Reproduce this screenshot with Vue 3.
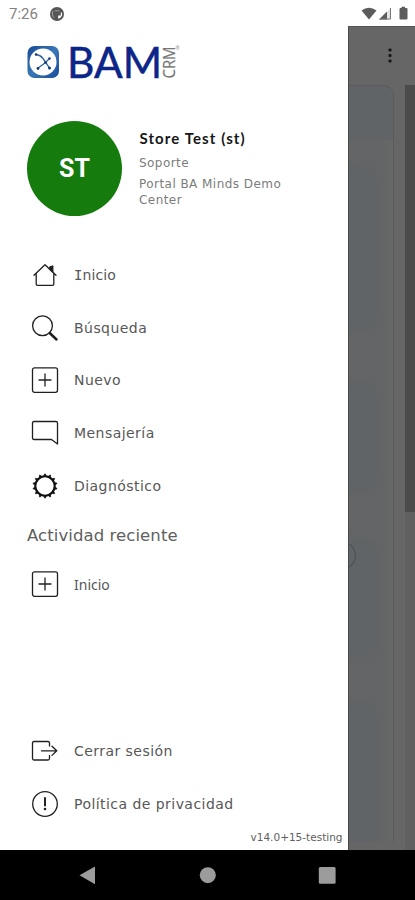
<script setup>
const mainItems = [
  { label: 'Inicio', icon: 'home', cls: 'serif-i' },
  { label: 'Búsqueda', icon: 'search' },
  { label: 'Nuevo', icon: 'plus' },
  { label: 'Mensajería', icon: 'message' },
  { label: 'Diagnóstico', icon: 'gear' },
]
const groups = [
  { name: 'main', items: mainItems },
  { name: 'recent', title: 'Actividad reciente', items: [{ label: 'Inicio', icon: 'plus', cls: 'narrow' }] },
  { name: 'footer', items: [
    { label: 'Cerrar sesión', icon: 'exit' },
    { label: 'Política de privacidad', icon: 'info' },
  ] },
]
const teeth = Array.from({ length: 14 }, (_, i) => (i * 360) / 14)
</script>

<template>
  <div class="phone">
    <header class="status">
      <span class="time">7:26</span>
      <svg class="app-dot" width="14" height="14" viewBox="0 0 14 14">
        <circle cx="7" cy="7" r="7" fill="#555" />
        <path d="M8.200 11.800V8.600H10.800V5.500H12A5.200 5.200 0 0 1 8.200 11.800Z" fill="#fff" />
        <path d="M4.300 10.800A5.200 5.200 0 0 1 3.300 3.800" fill="none" stroke="#aaa" stroke-width="1" />
        <path d="M5 3.800H9.500" stroke="#999" />
      </svg>
      <svg class="signals" width="48" height="16" viewBox="0 0 48 16">
        <path d="M0.500 4.500Q8 -1 15.500 4.500L8 13.500Z" fill="#5c5c5c" />
        <path d="M18 13.500L30 1.500V13.500Z" fill="#e4e4e4" />
        <path d="M18 13.500L26 5.500V13.500Z" fill="#5c5c5c" />
        <path d="M29.500 2V13H18.500" fill="none" stroke="#777" />
        <path d="M39 2H40.500V0.800H44V2H45.500Q46.500 2 46.500 3V12.500Q46.500 13.500 45.500 13.500H39.500Q38.500 13.500 38.500 12.500V3Z" fill="#5c5c5c" />
      </svg>
    </header>

    <div class="stage">
      <aside class="drawer">
        <div class="brand">
          <svg width="165" height="46" viewBox="0 0 165 46">
            <defs>
              <linearGradient id="tile" x1="0" y1="0" x2="1" y2="1">
                <stop offset="0" stop-color="#164a95" /><stop offset=".5" stop-color="#3977b6" /><stop offset="1" stop-color="#194b99" />
              </linearGradient>
            </defs>
            <rect x="0.500" y="3" width="31.500" height="32" rx="7" fill="url(#tile)" />
            <circle cx="16" cy="19" r="13.500" fill="#fff" />
            <path d="M9 11.500Q13.500 12 16 15.500T22.500 25M22.500 15.500L18 20L11 25" fill="none" stroke="#3265a3" stroke-width="1.300" stroke-linecap="round" />
            <g fill="#12386f"><circle cx="9" cy="11.500" r="1.200" /><circle cx="22.500" cy="15.500" r="1.200" /><circle cx="11" cy="25.500" r="1.400" /><circle cx="22.500" cy="25" r="1.500" /><circle cx="18.500" cy="19.500" r="1.300" /></g>
            <text class="bam" x="40" y="34.500" textLength="95" lengthAdjust="spacingAndGlyphs">BAM</text>
            <text class="crm" transform="translate(147.500 35.500) rotate(-90)" textLength="32" lengthAdjust="spacingAndGlyphs">CRM</text>
            <text class="mark" x="148.500" y="7">®</text>
          </svg>
        </div>

        <section class="profile">
          <div class="avatar">ST</div>
          <div class="who">
            <div class="name">Store Test (st)</div>
            <div class="role">Soporte</div>
            <div class="org">Portal BA Minds Demo<br />Center</div>
          </div>
        </section>

        <nav v-for="g in groups" :key="g.name" :class="['group', g.name]">
          <h2 v-if="g.title">{{ g.title }}</h2>
          <a v-for="item in g.items" :key="item.label" class="item">
            <svg width="28" height="28" viewBox="0 0 28 28" fill="none" stroke="#202020" stroke-width="1.300" stroke-linecap="round" stroke-linejoin="round">
              <template v-if="item.icon === 'home'">
                <path d="M3 14.300L14 3.700L25 14.300M5.200 12.600V23Q5.200 24.300 6.500 24.300H21.500Q22.800 24.300 22.800 23V12.600" />
                <path d="M19 5.800L21.800 5V11L18.500 8Z" fill="#202020" />
              </template>
              <template v-else-if="item.icon === 'search'">
                <circle cx="11.500" cy="11.800" r="9.900" /><path d="M18.700 19L25.500 25.500" stroke-width="2.500" />
              </template>
              <template v-else-if="item.icon === 'plus'">
                <rect x="1.500" y="1.800" width="25" height="24.500" rx="2" /><path d="M8 14H20M14 8V20" />
              </template>
              <path v-else-if="item.icon === 'message'" d="M3 2.500H25Q26.500 2.500 26.500 4V25L20.500 20.500H3Q1.500 20.500 1.500 19V4Q1.500 2.500 3 2.500Z" />
              <template v-else-if="item.icon === 'gear'">
                <circle cx="14" cy="14" r="9.700" stroke-width="2.100" stroke="#111" />
                <path v-for="a in teeth" :key="a" d="M12.900 4L13.600 1.900H14.400L15.100 4Z" :transform="`rotate(${a} 14 14)`" fill="#111" stroke="#111" stroke-width=".7" />
              </template>
              <path v-else-if="item.icon === 'exit'" d="M18.500 9V6Q18.500 4.500 17 4.500H3Q1.500 4.500 1.500 6V21.500Q1.500 23 3 23H17Q18.500 23 18.500 21.500V18.500M10.500 13.800H25.500M21 9.200L25.800 13.800L21 18.400" />
              <template v-else>
                <circle cx="14" cy="14" r="12.300" /><path d="M14 8V15.500" stroke-width="2" /><circle cx="14" cy="19" r=".7" fill="#202020" />
              </template>
            </svg>
            <span :class="['label', item.cls]">{{ item.label }}</span>
          </a>
        </nav>
        <div class="version">v14.0+15-testing</div>
      </aside>

      <main class="page">
        <div class="toolbar">
          <svg width="4" height="15" viewBox="0 0 4 15" fill="#151515"><rect x=".5" y="0.500" width="3" height="3" rx="1" /><rect x=".5" y="6" width="3" height="3" rx="1" /><rect x=".5" y="11.500" width="3" height="3" rx="1" /></svg>
        </div>
        <div class="content">
          <div class="panel">
            <div class="panel-head"></div>
            <div class="blob b1"></div>
            <div class="blob b2"></div>
            <div class="blob b3"></div>
            <div class="blob b4"></div>
            <div class="knob"></div>
          </div>
          <div class="track"><div class="thumb"></div></div>
        </div>
      </main>
    </div>

    <footer class="keys">
      <svg width="415" height="50" viewBox="0 0 415 50" fill="#9c9c9c">
        <path d="M79.500 25.300L95 16.500V34.200Z" /><circle cx="207.800" cy="25.200" r="8" /><rect x="318.800" y="17" width="16.800" height="16.800" rx="1.500" />
      </svg>
    </footer>
  </div>
</template>

<style>
body { margin: 0; overflow: hidden; }
</style>

<style scoped>
.phone { width: 415px; height: 900px; display: flex; flex-direction: column; background: #fff; font-family: "DejaVu Sans", sans-serif; overflow: hidden; }
.status { height: 26px; flex: none; display: flex; align-items: center; padding: 1px 6px 0 9px; box-sizing: border-box; }
.time { font: 15px Roboto, sans-serif; color: #828282; width: 41px; }
.signals { margin-left: auto; }
.stage { height: 824px; flex: none; display: flex; }
.drawer { width: 348px; height: 824px; box-sizing: border-box; flex: none; background: #fff; display: flex; flex-direction: column; padding-left: 27px; }
.brand { height: 38px; padding-top: 17px; }
.brand svg { display: block; overflow: visible; }
.bam { font: 43px Lato, sans-serif; fill: #0c2588; stroke: #0c2588; stroke-width: .5px; }
.crm { font: 16px "Open Sans", sans-serif; fill: #777; stroke: #777; stroke-width: .2px; }
.mark { font: 5px "Open Sans", sans-serif; fill: #888; }
.profile { display: flex; height: 95px; margin-top: 39.500px; }
.avatar { width: 95px; height: 95px; border-radius: 50%; background: #147b0c; color: #fff; display: flex; align-items: center; justify-content: center; font: 700 25px Roboto, sans-serif; }
.who { padding: 7px 0 0 17px; color: #7c7c7c; font-size: 12px; line-height: 15.500px; letter-spacing: .45px; }
.name { font: 700 15px/21px Lato, sans-serif; letter-spacing: 1.1px; color: #171717; padding-left: .5px; }
.role { margin-top: 7px; }
.org { margin-top: 6px; white-space: nowrap; }
.group { display: flex; flex-direction: column; }
.main { margin-top: 33.200px; }
.item { height: 52.700px; display: flex; align-items: center; padding-left: 4px; }
.label { margin-left: 15px; font-size: 14px; letter-spacing: .45px; color: #575757; white-space: nowrap; }
.serif-i { display: block; letter-spacing: .1px; }
.serif-i::first-letter { font-family: "DejaVu Sans Mono", monospace; }
.narrow { font-family: "Noto Sans", sans-serif; letter-spacing: 0; }
h2 { margin: 0; font-size: 16.500px; line-height: 24px; font-weight: 400; color: #606060; letter-spacing: .08px; padding-top: 11.500px; }
.recent .item { height: 73px; }
.footer { margin-top: auto; }
.version { height: 20px; box-sizing: border-box; padding-right: 5.500px; text-align: right; font-size: 10.500px; line-height: 15px; color: #606060; }
.page { flex: 1; background: #666; border-left: 1px solid #494949; border-top: 1px solid #555; box-sizing: border-box; height: 824px; overflow: hidden; }
.toolbar { height: 58px; box-sizing: border-box; padding: 21px 23px 0 0; display: flex; justify-content: flex-end; }
.content { height: 765px; display: flex; justify-content: space-between; }
.panel { width: 45px; height: 757px; box-sizing: border-box; border: solid #5b5b5b; border-width: 1px 1px 0 0; border-radius: 0 10px 0 0; position: relative; overflow: hidden; background: linear-gradient(90deg, #646566 36px, #656666 38px, #676767); }
.panel-head { height: 54px; background: #606467; }
.blob { position: absolute; left: -12px; width: 40px; background: #606466; border-radius: 0 14px 14px 0; filter: blur(3px); }
.b1 { top: 80px; height: 166px; }
.b2 { top: 295px; height: 112px; }
.b3 { top: 452px; height: 118px; }
.b4 { top: 615px; height: 160px; }
.knob { position: absolute; left: -24px; top: 455px; width: 29px; height: 27px; border: 1px solid #4d4f50; border-radius: 50%; }
.track { width: 10px; height: 765px; background: #606060; }
.thumb { height: 427px; background: #4b4b4b; }
.keys { height: 50px; background: #000; }
.keys svg { display: block; }
</style>
